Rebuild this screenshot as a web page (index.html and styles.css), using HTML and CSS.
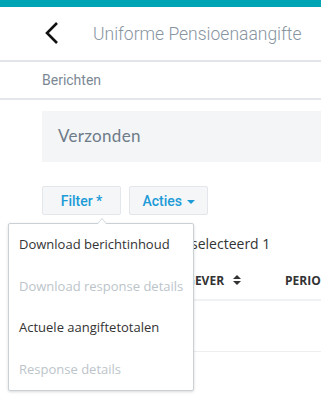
FILE: index.html
```html
<html>

<head>
  <title>Uniforme Pensioenaangifte - Berichten</title>
  <link rel="stylesheet" href="styles.css">
</head>

<body>
  <div class="topbar"></div>

  <header class="appbar">
    <button class="back" aria-label="Terug">
      <svg width="16" height="24" viewBox="0 0 16 24">
        <polyline points="13,2 3,12 13,22" fill="none" stroke="#111" stroke-width="2.6" />
      </svg>
    </button>
    <h1>Uniforme Pensioenaangifte</h1>
  </header>

  <nav class="crumbs">Berichten</nav>

  <main class="content">
    <div class="page-title">Verzonden</div>

    <div class="toolbar">
      <button class="btn">Filter *</button>
      <button class="btn">Acties <span class="caret"></span></button>

      <div class="dropdown">
        <ul>
          <li>Download berichtinhoud</li>
          <li class="disabled">Download response details</li>
          <li>Actuele aangiftetotalen</li>
          <li class="disabled">Response details</li>
        </ul>
      </div>
    </div>

    <div class="count">Geselecteerd 1</div>

    <div class="table">
      <div class="row head">
        <div class="col col-wg">WERKGEVER <span class="sort"></span></div>
        <div class="col col-per">PERIODE</div>
      </div>
      <div class="row body"></div>
    </div>
  </main>
</body>

</html>
```

FILE: styles.css
```css
body {
  margin: 0;
  font-family: 'Open Sans', sans-serif;
  color: #333;
  background: #fff;
  overflow: hidden;
}

.topbar {
  height: 7px;
  background: #00a5b5;
}

.appbar {
  display: flex;
  align-items: center;
  height: 53px;
  border-bottom: 2px solid #e1e5ea;
}

.back {
  border: 0;
  background: none;
  padding: 0;
  margin-left: 43px;
  width: 18px;
  height: 24px;
  margin-top: -1px;
}

.appbar h1 {
  margin: 0 0 0 32px;
  font-family: 'Roboto', sans-serif;
  font-weight: 300;
  font-size: 17.5px;
  color: #8794a1;
  white-space: nowrap;
}

.crumbs {
  height: 36px;
  line-height: 36px;
  padding-left: 42px;
  font-family: 'Roboto', sans-serif;
  font-size: 14px;
  color: #7b8894;
  border-bottom: 2px solid #e3e7eb;
}

.content {
  padding-left: 42px;
}

.page-title {
  margin-top: 11px;
  height: 51px;
  line-height: 49px;
  padding-left: 16px;
  background: #f4f5f7;
  font-family: 'Lato', sans-serif;
  font-size: 17px;
  color: #6e7b89;
  letter-spacing: 0.3px;
}

.toolbar {
  position: relative;
  display: flex;
  gap: 8px;
  margin-top: 24px;
}

.btn {
  height: 29px;
  width: 79px;
  background: #f4f6f8;
  border: 1px solid #e3e6ea;
  border-radius: 2px;
  font-family: 'Roboto', sans-serif;
  font-weight: 500;
  font-size: 14px;
  color: #1c9bd7;
  padding: 0;
}

.caret {
  display: inline-block;
  width: 0;
  height: 0;
  border-left: 4px solid transparent;
  border-right: 4px solid transparent;
  border-top: 4px solid #1c9bd7;
  vertical-align: middle;
  margin-left: 1px;
}

.dropdown {
  position: absolute;
  left: -34px;
  top: 37px;
  width: 184px;
  background: #fff;
  border: 1px solid #c9d1d7;
  border-radius: 2px;
  box-shadow: 0 1px 3px rgb(0 0 0 / 15%);
  z-index: 2;
}

.dropdown::before,
.dropdown::after {
  content: '';
  position: absolute;
  left: 88px;
  width: 0;
  height: 0;
  border-left: 5px solid transparent;
  border-right: 5px solid transparent;
}

.dropdown::before {
  top: -6px;
  border-bottom: 6px solid #c9d1d7;
}

.dropdown::after {
  top: -5px;
  border-bottom: 6px solid #fff;
}

.dropdown ul {
  list-style: none;
  margin: 0;
  padding: 0;
}

.dropdown li {
  height: 41.5px;
  line-height: 41.5px;
  padding-left: 10px;
  font-size: 13px;
  color: #333;
  white-space: nowrap;
}

.dropdown li.disabled {
  color: #bcc4ca;
}

.count {
  margin-top: 19px;
  padding-left: 131px;
  font-size: 14px;
  line-height: 20px;
  white-space: nowrap;
}

.table {
  margin-top: 7px;
}

.row {
  display: flex;
  white-space: nowrap;
}

.row.head {
  height: 38px;
  align-items: center;
  border-bottom: 2px solid #f0f1f2;
  font-size: 12px;
  font-weight: 700;
}

.row.body {
  height: 50px;
  border-bottom: 1px solid #eceef0;
}

.col-wg {
  flex-shrink: 0;
  width: 243px;
  padding-left: 110px;
  box-sizing: border-box;
  display: flex;
  align-items: center;
}

.sort {
  position: relative;
  display: inline-block;
  width: 8px;
  height: 10px;
  margin-left: 9px;
}

.sort::before,
.sort::after {
  content: '';
  position: absolute;
  left: 0;
  border-left: 4px solid transparent;
  border-right: 4px solid transparent;
}

.sort::before {
  top: 0;
  border-bottom: 4px solid #333;
}

.sort::after {
  bottom: 0;
  border-top: 4px solid #333;
}
```
